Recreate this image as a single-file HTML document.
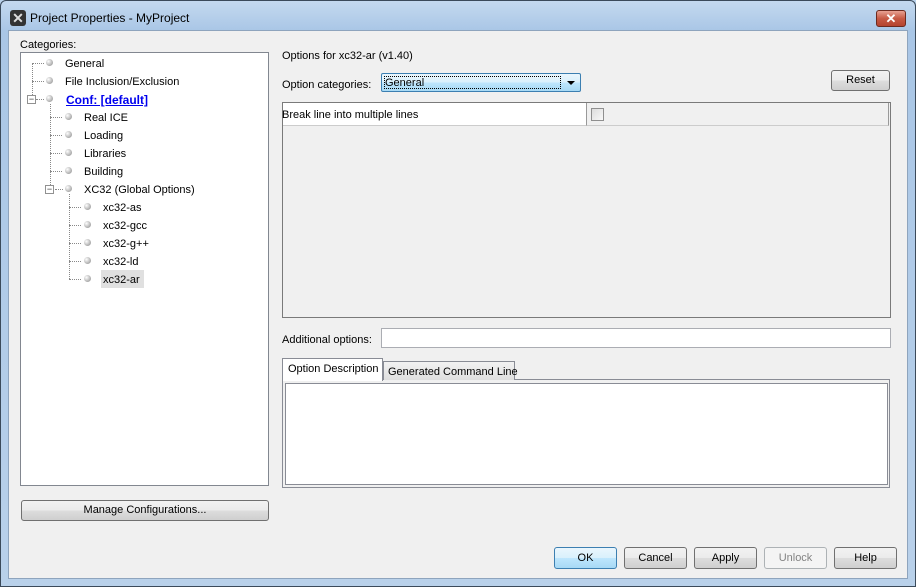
<!DOCTYPE html>
<html><head><style>
*{box-sizing:border-box;margin:0;padding:0}
body{width:916px;height:587px;overflow:hidden;background:#b9d1ea;font-family:"Liberation Sans",sans-serif;font-size:11px;color:#000;position:relative}
.a{position:absolute}
.frame{left:0;top:0;width:916px;height:587px;background:linear-gradient(#c4d9ef,#a9c6e6 30px,#b9d1ea);border:1px solid #3b4a5a;border-radius:6px 6px 0 0}
.content{left:8px;top:30px;width:900px;height:549px;background:#f0f0f0;border:1px solid #8ea4bd}
.btn{position:absolute;border:1px solid #707070;border-radius:3px;background:linear-gradient(#f2f2f2 0,#ebebeb 50%,#dddddd 51%,#cfcfcf);text-align:center;line-height:21px}
.t{position:absolute;white-space:nowrap;top:0;margin-top:1px}
.dot{position:absolute;width:7px;height:7px;border-radius:50%;background:radial-gradient(circle at 35% 35%,#fff,#aaa 70%,#888)}
.hl{position:absolute;border-top:1px dotted #888;width:12px}
.vl{position:absolute;border-left:1px dotted #888}
.pm{position:absolute;width:9px;height:9px;border:1px solid #919191;background:#fff;font-size:9px;line-height:6px;text-align:center;color:#333}
</style></head><body>
<div class="a frame"></div>
<div class="a" style="left:10px;top:10px;width:16px;height:16px;background:#333;border-radius:3px;color:#ddd;font-weight:bold;font-size:14px;line-height:16px;text-align:center">✕</div>
<div class="t" style="left:30px;top:10px;font-size:12px">Project Properties - MyProject</div>
<div class="a" style="left:876px;top:10px;width:30px;height:17px;border:1px solid #6d2a1f;border-radius:3px;background:linear-gradient(#e8a293,#c75a45 50%,#b4432f);color:#fff;font-weight:bold;font-size:13px;line-height:15px;text-align:center">✕</div>
<div class="a content"></div>

<div class="t" style="left:20px;top:38px">Categories:</div>
<div class="a" style="left:20px;top:52px;width:249px;height:434px;background:#fff;border:1px solid #828790"></div>
<div class="vl" style="left:32px;top:63px;height:36px"></div>
<div class="hl" style="left:32px;top:63px"></div><div class="dot" style="left:46px;top:59px"></div><div class="t" style="left:65px;top:57px">General</div>
<div class="hl" style="left:32px;top:81px"></div><div class="dot" style="left:46px;top:77px"></div><div class="t" style="left:65px;top:75px">File Inclusion/Exclusion</div>
<div class="hl" style="left:36px;top:99px;width:8px"></div><div class="pm" style="left:27px;top:95px">−</div><div class="dot" style="left:46px;top:95px"></div><div class="t" style="left:66px;top:92px;color:#0000ee;font-weight:bold;text-decoration:underline;font-size:12px">Conf: [default]</div>
<div class="vl" style="left:50px;top:104px;height:85px"></div>
<div class="hl" style="left:50px;top:117px"></div><div class="dot" style="left:65px;top:113px"></div><div class="t" style="left:84px;top:111px">Real ICE</div>
<div class="hl" style="left:50px;top:135px"></div><div class="dot" style="left:65px;top:131px"></div><div class="t" style="left:84px;top:129px">Loading</div>
<div class="hl" style="left:50px;top:153px"></div><div class="dot" style="left:65px;top:149px"></div><div class="t" style="left:84px;top:147px">Libraries</div>
<div class="hl" style="left:50px;top:171px"></div><div class="dot" style="left:65px;top:167px"></div><div class="t" style="left:84px;top:165px">Building</div>
<div class="hl" style="left:55px;top:189px;width:8px"></div><div class="pm" style="left:45px;top:185px">−</div><div class="dot" style="left:65px;top:185px"></div><div class="t" style="left:84px;top:183px">XC32 (Global Options)</div>
<div class="vl" style="left:69px;top:194px;height:85px"></div>
<div class="hl" style="left:69px;top:207px"></div><div class="dot" style="left:84px;top:203px"></div><div class="t" style="left:103px;top:201px">xc32-as</div>
<div class="hl" style="left:69px;top:225px"></div><div class="dot" style="left:84px;top:221px"></div><div class="t" style="left:103px;top:219px">xc32-gcc</div>
<div class="hl" style="left:69px;top:243px"></div><div class="dot" style="left:84px;top:239px"></div><div class="t" style="left:103px;top:237px">xc32-g++</div>
<div class="hl" style="left:69px;top:261px"></div><div class="dot" style="left:84px;top:257px"></div><div class="t" style="left:103px;top:255px">xc32-ld</div>
<div class="hl" style="left:69px;top:279px"></div><div class="dot" style="left:84px;top:275px"></div><div class="a" style="left:101px;top:270px;width:43px;height:18px;background:#e0e0e0"></div><div class="t" style="left:103px;top:273px">xc32-ar</div>

<div class="btn" style="left:21px;top:500px;width:248px;height:21px;line-height:19px">Manage Configurations...</div>

<div class="t" style="left:282px;top:49px">Options for xc32-ar (v1.40)</div>
<div class="t" style="left:282px;top:78px">Option categories:</div>
<div class="a" style="left:381px;top:73px;width:200px;height:19px;border:1px solid #3c7fb1;border-radius:2px;background:linear-gradient(#eaf6fd,#d9f0fc 50%,#bee6fd 51%,#a7d9f5)"></div>
<div class="a" style="left:384px;top:76px;width:177px;height:13px;border:1px dotted #000"></div>
<div class="t" style="left:385px;top:76px">General</div>
<div class="a" style="left:567px;top:81px;border-left:4px solid transparent;border-right:4px solid transparent;border-top:4px solid #000"></div>
<div class="btn" style="left:831px;top:70px;width:59px;height:21px;line-height:19px">Reset</div>

<div class="a" style="left:282px;top:102px;width:609px;height:216px;border:1px solid #7a7a7a;background:#f0f0f0"></div>
<div class="a" style="left:283px;top:103px;width:303px;height:23px;background:#fff;border-bottom:1px solid #ccc"></div>
<div class="a" style="left:586px;top:103px;width:303px;height:23px;border-left:1px solid #999;border-bottom:1px solid #ccc;border-right:1px solid #999"></div>
<div class="t" style="left:282px;top:108px">Break line into multiple lines</div>
<div class="a" style="left:591px;top:108px;width:13px;height:13px;border:1px solid #8f8f8f;background:linear-gradient(135deg,#ddd,#f8f8f8)"></div>

<div class="t" style="left:282px;top:333px">Additional options:</div>
<div class="a" style="left:381px;top:328px;width:510px;height:20px;background:#fff;border:1px solid #abadb3"></div>

<div class="a" style="left:282px;top:379px;width:608px;height:109px;border:1px solid #898c95;background:#f0f0f0"></div>
<div class="a" style="left:285px;top:383px;width:603px;height:102px;border:1px solid #898c95;background:#fff"></div>
<div class="a" style="left:383px;top:361px;width:132px;height:19px;border:1px solid #898c95;border-bottom:none;background:linear-gradient(#f2f2f2,#dedede)"></div>
<div class="t" style="left:388px;top:365px">Generated Command Line</div>
<div class="a" style="left:282px;top:358px;width:101px;height:23px;border:1px solid #898c95;border-bottom:none;background:#fff"></div>
<div class="t" style="left:288px;top:362px">Option Description</div>

<div class="btn" style="left:554px;top:547px;width:63px;height:22px;border-color:#3c7fb1;background:linear-gradient(#eaf6fd,#d9f0fc 50%,#bee6fd 51%,#a7d9f5)">OK</div>
<div class="btn" style="left:624px;top:547px;width:63px;height:22px">Cancel</div>
<div class="btn" style="left:694px;top:547px;width:63px;height:22px">Apply</div>
<div class="btn" style="left:764px;top:547px;width:63px;height:22px;border-color:#adb2b5;background:#f4f4f4;color:#838383">Unlock</div>
<div class="btn" style="left:834px;top:547px;width:63px;height:22px">Help</div>
</body></html>
